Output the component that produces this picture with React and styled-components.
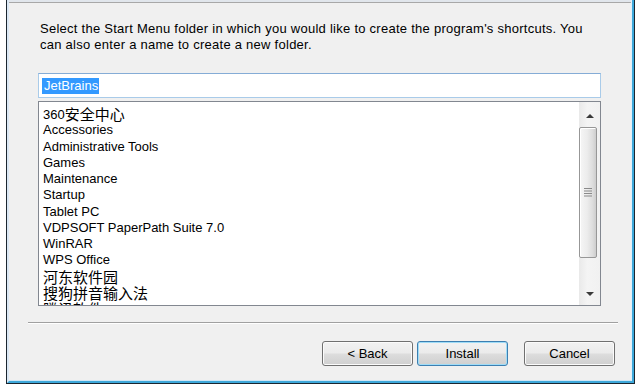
import styled, { createGlobalStyle } from "styled-components";

const GlobalStyle = createGlobalStyle`
  body {
    margin: 0;
    background: #ffffff;
    font-family: "Liberation Sans", "Noto Sans CJK SC", sans-serif;
  }
`;

const Window = styled.div`
  box-sizing: border-box;
  width: 629px;
  height: 384px;
  margin-left: 6px;
  display: flex;
  border: 1px solid #1b2630;
  border-top: none;
`;

const Frame = styled.div`
  flex: 1;
  display: flex;
  border-left: 2px solid #dbe8f4;
  border-right: 2px solid #3ea8da;
  border-bottom: 2px solid #3ea8da;
`;

const Panel = styled.div`
  flex: 1;
  display: flex;
  flex-direction: column;
  background: #f0f0f0;
  border-right: 1px solid #e4f1fa;
  border-bottom: 1px solid #cfe6f5;
`;

const TopEdge = styled.div`
  height: 2px;
  background: #e1e6ec;
  border-bottom: 1px solid #a8a8a8;
`;

const Body = styled.div`
  flex: 1;
  display: flex;
  flex-direction: column;
  padding-left: 19px;
`;

const Content = styled.div`
  width: 563px;
  margin-left: 10px;
  display: flex;
  flex-direction: column;
`;

const Description = styled.div`
  margin: 18px 0 0 2px;
  font-size: 13px;
  line-height: 16px;
  letter-spacing: 0.26px;
  color: #000;
  white-space: nowrap;
`;

const TextField = styled.div`
  box-sizing: border-box;
  height: 25px;
  margin-top: 20px;
  padding-left: 3px;
  display: flex;
  align-items: center;
  background: #fff;
  border: 1px solid #a9cbe9;
  border-top-color: #85acd6;
`;

const Selected = styled.span`
  background: #3399ff;
  color: #fff;
  font-size: 13px;
  line-height: 16px;
  padding: 0 1px 0 2px;
`;

const ListBox = styled.div`
  box-sizing: border-box;
  height: 205px;
  margin-top: 3px;
  display: flex;
  background: #fff;
  border: 1px solid #828790;
  overflow: hidden;
`;

const Items = styled.div`
  flex: 1;
  padding: 4px 0 0 4px;
  overflow: hidden;
`;

const Item = styled.div`
  height: 16.25px;
  line-height: 16.25px;
  font-size: 13px;
  color: #000;
  white-space: nowrap;
`;

const Cjk = styled.span`
  font-family: "Noto Sans CJK SC", sans-serif;
  font-size: 15px;
  vertical-align: -1px;
`;

const Scrollbar = styled.div`
  width: 21px;
  display: flex;
  flex-direction: column;
  background: linear-gradient(to right, #e9e9e9, #f4f4f4 40%, #f1f1f1);
`;

const ArrowButton = styled.div`
  display: flex;
  justify-content: center;
  align-items: ${(p) => (p.down ? "flex-end" : "flex-start")};
  height: ${(p) => (p.down ? "22px" : "25px")};
  padding: ${(p) => (p.down ? "0 0 9px" : "12px 0 0")};
  box-sizing: border-box;
  margin-top: ${(p) => (p.down ? "auto" : "0")};
`;

const Thumb = styled.div`
  box-sizing: border-box;
  width: 18px;
  height: 131px;
  display: flex;
  align-items: center;
  justify-content: center;
  border: 1px solid #979797;
  border-radius: 2px;
  background: linear-gradient(to right, #f6f6f6, #ececec 45%, #dcdcdc 80%, #cdcdcd);
  box-shadow: inset 1px 1px 0 #ffffff;
`;

const Separator = styled.div`
  width: 590px;
  margin-top: 16px;
  border-top: 1px solid #a0a0a0;
  border-bottom: 1px solid #ffffff;
`;

const ButtonRow = styled.div`
  width: 590px;
  margin-top: 17px;
  padding-right: 3px;
  box-sizing: border-box;
  display: flex;
  justify-content: flex-end;
`;

const Button = styled.button`
  box-sizing: border-box;
  width: 91px;
  height: 25px;
  margin-right: ${(p) => p.gap || 0}px;
  padding: 0;
  font: 13px "Liberation Sans", sans-serif;
  color: #000;
  border: 1px solid ${(p) => (p.primary ? "#3c7fb1" : "#707070")};
  border-radius: 3px;
  background: linear-gradient(#f2f2f2 0%, #ebebeb 48%, #dddddd 52%, #cfcfcf 100%);
  box-shadow: inset 0 0 0 1px ${(p) => (p.primary ? "#9fdcf7" : "#fbfbfb")};
`;

const Arrow = ({ down }) => (
  <svg width="8" height="4" viewBox="0 0 8 4">
    <path d={down ? "M0 0H8L4 4Z" : "M0 4H8L4 0Z"} fill="#3a3a3a" />
  </svg>
);

const Gripper = () => (
  <svg width="8" height="9" viewBox="0 0 8 9">
    {[0, 2.5, 5, 7.5].map((y) => (
      <rect key={y} x="0" y={y} width="8" height="1" fill="#8a8a8a" />
    ))}
  </svg>
);

const folders = [
  ["360", <Cjk key="c">安全中心</Cjk>],
  "Accessories",
  "Administrative Tools",
  "Games",
  "Maintenance",
  "Startup",
  "Tablet PC",
  "VDPSOFT PaperPath Suite 7.0",
  "WinRAR",
  "WPS Office",
  <Cjk key="h">河东软件园</Cjk>,
  <Cjk key="s">搜狗拼音输入法</Cjk>,
  <Cjk key="t">腾讯软件</Cjk>,
];

export default function App() {
  return (
    <>
      <GlobalStyle />
      <Window>
        <Frame>
          <Panel>
            <TopEdge />
            <Body>
              <Content>
                <Description>
                  Select the Start Menu folder in which you would like to create the program's shortcuts. You
                  <br />
                  can also enter a name to create a new folder.
                </Description>
                <TextField>
                  <Selected>JetBrains</Selected>
                </TextField>
                <ListBox>
                  <Items>
                    {folders.map((f, i) => (
                      <Item key={i}>{f}</Item>
                    ))}
                  </Items>
                  <Scrollbar>
                    <ArrowButton>
                      <Arrow />
                    </ArrowButton>
                    <Thumb>
                      <Gripper />
                    </Thumb>
                    <ArrowButton down>
                      <Arrow down />
                    </ArrowButton>
                  </Scrollbar>
                </ListBox>
              </Content>
              <Separator />
              <ButtonRow>
                <Button gap={4}>&lt; Back</Button>
                <Button primary gap={16}>Install</Button>
                <Button>Cancel</Button>
              </ButtonRow>
            </Body>
          </Panel>
        </Frame>
      </Window>
    </>
  );
}
